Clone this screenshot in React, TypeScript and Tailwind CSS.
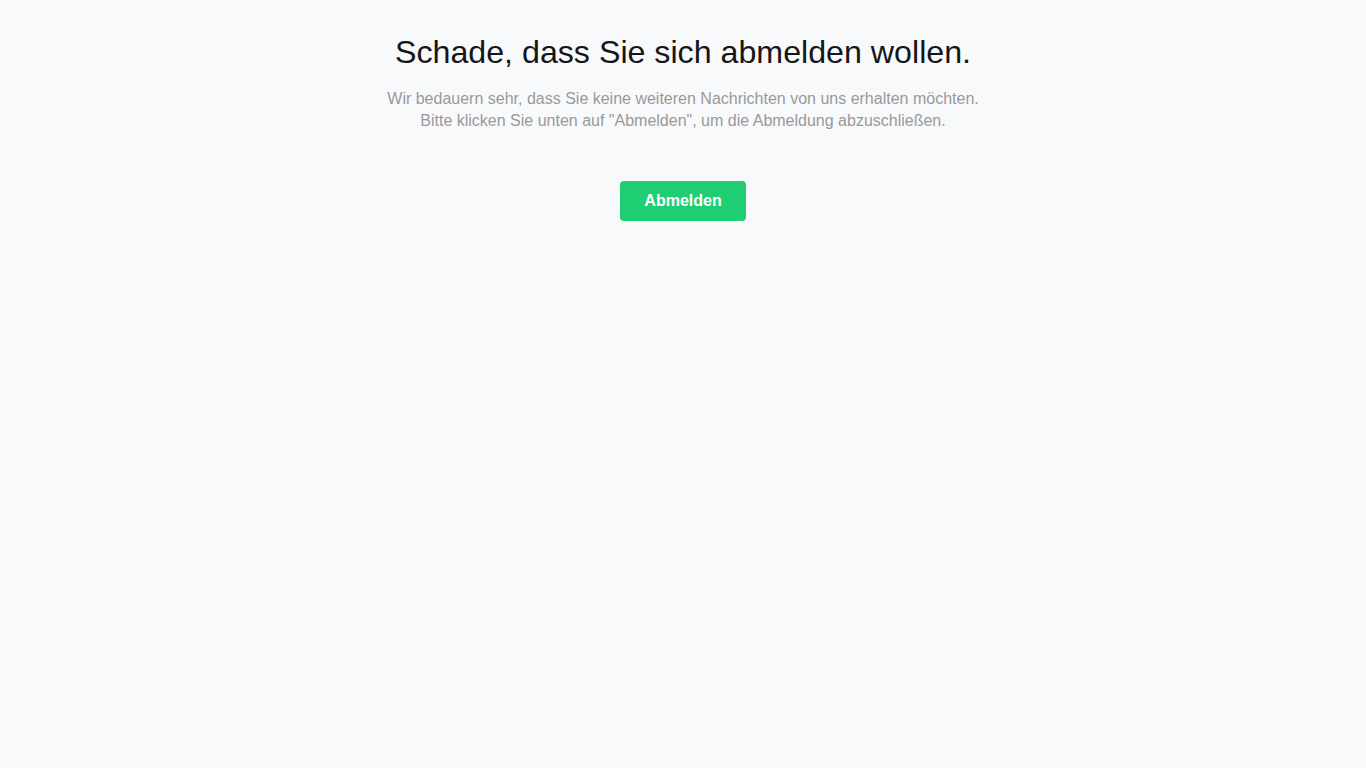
export default function App() {
  return (
    <div className="min-h-screen bg-[#f8f9fb] font-['Liberation_Sans',Arial,sans-serif]">
      <div className="flex flex-col items-center pt-[34px] text-center">
        <h1 className="text-[32.2px] leading-[37px] text-[#161616]">Schade, dass Sie sich abmelden wollen.</h1>
        <p className="mt-[17px] text-base leading-[22px] text-[#999999]">
          Wir bedauern sehr, dass Sie keine weiteren Nachrichten von uns erhalten möchten.
          <br />
          Bitte klicken Sie unten auf "Abmelden", um die Abmeldung abzuschließen.
        </p>
        <button className="mt-[49px] h-10 rounded-[4px] bg-[#1fcd72] px-6 text-base font-bold text-white">
          Abmelden
        </button>
      </div>
    </div>
  );
}
